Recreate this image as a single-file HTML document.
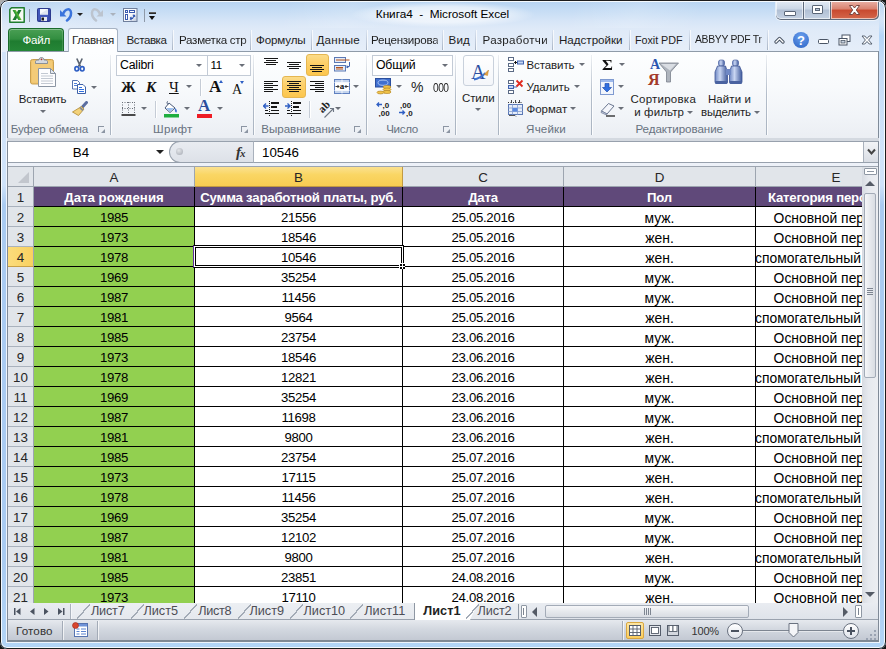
<!DOCTYPE html>
<html lang="ru">
<head>
<meta charset="utf-8">
<title>Книга4 - Microsoft Excel</title>
<style>
html,body{margin:0;padding:0;}
body{width:886px;height:649px;overflow:hidden;background:#151515 linear-gradient(135deg,#b5b5b5 0,#9a9a9a 6px,#151515 7px) no-repeat;background-size:12px 12px,auto;font-family:"Liberation Sans",sans-serif;font-size:11.5px;color:#1e1e1e;position:relative;}
#win{position:absolute;left:0;top:0;width:886px;height:649px;border-radius:8px 8px 7px 7px;overflow:hidden;background:linear-gradient(180deg,#d9e7f8 0,#d3e4f9 52px,#cfe3fa 185px,#aacbf1 205px,#a9cbf1 560px,#b3d5f7 100%);}
#win::before{content:"";position:absolute;left:1px;top:1px;width:884px;height:51px;background:linear-gradient(180deg,#b6d3f1 0,#c3dbf4 8px,#d6e5f7 20px,#dfeaf8 28px,#e6eef9 51px);}
#win::after{content:"";position:absolute;left:0;top:0;width:884px;height:647px;border:1px solid #1c1c1c;border-radius:8px 8px 7px 7px;box-shadow:inset 0 0 0 1px rgba(255,255,255,.85);pointer-events:none;z-index:50;}
#topglow{position:absolute;left:1px;top:2px;width:884px;height:26px;background:repeating-linear-gradient(115deg,rgba(255,255,255,0) 0,rgba(255,255,255,.14) 60px,rgba(255,255,255,0) 120px,rgba(255,255,255,0) 260px);}
#rstrip{position:absolute;left:879px;top:18px;width:6px;height:130px;background:linear-gradient(180deg,rgba(176,212,248,0) 0,#b4d6f8 18px,#c3dcf8 40px,rgba(207,227,250,0) 100%);}
#inner{position:absolute;left:6px;top:52px;width:874px;height:591px;border:1px solid #eef4fc;border-top:none;box-sizing:border-box;}
#inner::after{content:"";position:absolute;left:0;top:0;width:870px;height:589px;border-left:1px solid #808a97;border-right:1px solid #808a97;border-bottom:1px solid #808a97;}
i,b{font-style:normal;font-weight:normal;}u{text-decoration:none;}
.a{position:absolute;}
/* ---------- grid ---------- */
#grid{position:absolute;left:8px;top:167px;width:854px;height:436px;background:#fff;overflow:hidden;font-size:13.2px;color:#000;}
#grid .hdr{position:absolute;left:0;top:0;width:1000px;height:20px;}
#grid .hdr b,#grid .hdr i{position:absolute;top:0;height:19px;line-height:22px;text-align:center;color:#262626;background:#e1e5ea;border-right:1px solid #9da5b0;border-bottom:1px solid #9da5b0;font-size:13.4px;}
#grid .hdr i.corner{left:0;width:25px;}
#grid .hdr i.corner::after{content:"";position:absolute;left:10px;top:5px;width:0;height:0;border-left:11px solid transparent;border-bottom:11px solid #c2c6cd;}
#grid .hdr b.sel{background:linear-gradient(#fbe190 0%,#fad664 40%,#f8cc52 100%);border-right-color:#c29a43;border-bottom-color:#c29a43;}
.r{position:absolute;left:0;width:1000px;height:20px;}
.r span,.r b{position:absolute;top:0;height:19px;line-height:22px;text-align:center;white-space:nowrap;overflow:hidden;border-right:1px solid #000;border-bottom:1px solid #000;}
.r b.rh{left:0;width:25px;background:#e1e5ea;color:#262626;border-right:1px solid #9da5b0;border-bottom:1px solid #aab2bd;font-size:13.4px;}
.r b.rh.sel{background:linear-gradient(90deg,#fbdc7c,#f9d160);border-bottom-color:#c8a046;}
.ca{left:26px;width:160px;}
.cb{left:187px;width:207px;}
.cc{left:395px;width:160px;}
.cd{left:556px;width:191px;}
.ce{left:748px;width:164px;}
.r span.ca,.r span.cb,.r span.cc{letter-spacing:-.3px;}
.r span.cd,.r span.ce{font-size:13.9px;}
.r.h span.ca,.r.h span.cb,.r.h span.cc,.r.h span.cd,.r.h span.ce{letter-spacing:-.2px;font-size:13.2px;}
.r.h .ce u{margin-left:-2px;}
.ce u.w{margin-left:-2px;}
.r.h span.ca{letter-spacing:.05px;}
#grid .hdr b.ce{width:160px;}
.r span.ca{background:#92d050;}
.r.h span{background:#60497a;color:#fff;font-weight:bold;letter-spacing:-.2px;}
.ce u{position:absolute;left:50%;top:0;transform:translateX(-50%);}
#selbox{position:absolute;left:185px;top:78px;width:205px;height:17px;border:3px solid #000;border-left-color:#5a2a9c;}
#selbox i{position:absolute;left:-2px;top:-2px;right:-2px;bottom:-2px;border:1px solid #fff;}
#selbox b{position:absolute;left:-1px;top:-1px;right:-1px;bottom:-1px;border:1px solid #000;}
#selh{position:absolute;left:391px;top:96px;width:6px;height:6px;background:#fff;}
#selh::before{content:"";position:absolute;left:1px;top:1px;width:5px;height:5px;background:#000;}
#selh::after{content:"";position:absolute;left:3px;top:1px;width:1px;height:5px;background:#fff;box-shadow:none;}
#selh i{position:absolute;left:1px;top:3px;width:5px;height:1px;background:#fff;z-index:2;}
/* ---------- title bar ---------- */
.dd{position:absolute;width:0;height:0;border-left:3px solid transparent;border-right:3px solid transparent;border-top:3px solid #6a6f78;}
#tglow{position:absolute;left:352px;top:2px;width:182px;height:25px;background:radial-gradient(ellipse at 50% 50%,rgba(255,255,255,.75) 0%,rgba(255,255,255,.55) 45%,rgba(255,255,255,0) 72%);}
#title{position:absolute;top:7px;font-size:11.8px;line-height:14px;color:#000;white-space:pre;}
#wbtn{position:absolute;left:776px;top:1px;width:103px;height:19px;border-radius:0 0 5px 5px;background:#5f6b7c;box-shadow:0 0 0 1px rgba(255,255,255,.55);}
.wb{position:absolute;top:0;height:18px;background:linear-gradient(#e3ebf5 0%,#cbd7e6 45%,#b0bfd3 50%,#c5d2e3 100%);box-shadow:inset 0 0 0 1px rgba(255,255,255,.6);}
.wb.cl{background:linear-gradient(#e9b1a6 0%,#d9826f 45%,#c8492f 50%,#d4674b 100%);}
/* ---------- ribbon tabs ---------- */
#tabs{position:absolute;left:0;top:0;width:886px;height:52px;}
.tab{position:absolute;top:32px;height:16px;line-height:16px;font-size:11.6px;color:#1e1e1e;white-space:nowrap;text-align:left;}
.tab.clip{-webkit-mask-image:linear-gradient(90deg,#000 96%,transparent 106%);mask-image:linear-gradient(90deg,#000 96%,transparent 106%);}
.tsep{position:absolute;top:30px;width:1px;height:20px;background:linear-gradient(rgba(160,172,190,.1),#a9b5c6);box-shadow:1px 0 0 rgba(255,255,255,.7);}
#file{position:absolute;left:8px;top:28px;width:56px;height:23px;border-radius:4px 4px 0 0;background:linear-gradient(#4a9f54 0%,#338f41 45%,#1f7c30 55%,#258637 100%);border:1px solid #1a6b2b;border-bottom:none;box-sizing:border-box;box-shadow:inset 0 1px 0 rgba(255,255,255,.35),inset 1px 0 0 rgba(255,255,255,.15),inset -1px 0 0 rgba(255,255,255,.15);}
#home{position:absolute;left:68px;top:28px;width:50px;height:24px;border:1px solid #a7b3c3;border-bottom:none;border-radius:3px 3px 0 0;background:#fdfeff;box-sizing:border-box;z-index:3;}
/* ---------- ribbon ---------- */
#ribbon{position:absolute;left:0;top:0;width:886px;height:142px;}
#ribbon::before{content:"";position:absolute;left:7px;top:51px;width:870px;height:86px;border:1px solid #7f8b99;border-top:1px solid #8f9ba9;background:linear-gradient(#fdfeff 0%,#f8fafc 40%,#f1f4f8 75%,#ebeef3 100%);border-radius:0 0 2px 2px;}
#ribbon::after{content:"";position:absolute;left:7px;top:138px;width:872px;height:3px;background:#d4d9e0;border-bottom:1px solid #8b95a2;}
.rt{position:absolute;font-size:11.5px;color:#1e1e1e;white-space:nowrap;line-height:14px;letter-spacing:-.1px;}
.ser{position:absolute;font-family:"Liberation Serif",serif;color:#111;line-height:18px;white-space:nowrap;}
.gl{position:absolute;top:121px;height:16px;line-height:16px;font-size:11.6px;color:#68727f;white-space:nowrap;}
.gla{position:absolute;top:126px;width:6px;height:6px;border-left:1px solid #8c95a3;border-top:1px solid #8c95a3;box-sizing:border-box;}
.gla::after{content:"";position:absolute;left:2px;top:2px;width:0;height:0;border-left:4px solid transparent;border-bottom:4px solid #8c95a3;}
.gsep{position:absolute;top:55px;width:1px;height:80px;background:linear-gradient(rgba(175,185,198,.2),#b3bdca 50%,#aab4c1);box-shadow:1px 0 0 rgba(255,255,255,.8);}
.isep{position:absolute;width:1px;height:17px;background:#c5ccd6;box-shadow:1px 0 0 #fff;}
.cbx{position:absolute;height:19px;border:1px solid #c3cbd6;background:#fff;font-size:12.3px;}
.cbx span{position:absolute;top:0;line-height:19px;color:#000;white-space:nowrap;}
.hl{position:absolute;border:1px solid #e5b651;border-radius:3px;background:linear-gradient(#fbdc8a 0%,#fdd06a 40%,#fcc64d 100%);}
/* ---------- formula bar ---------- */
#fbar{position:absolute;left:0;top:0;width:886px;height:167px;}
#fwhite{position:absolute;left:8px;top:141px;width:870px;height:20px;background:#fff;border-top:1px solid #98a1ad;border-bottom:1px solid #98a1ad;}
#fbar::after{content:"";position:absolute;left:8px;top:163px;width:870px;height:3px;background:#edf1f8;border-bottom:1px solid #9da5b0;}
.ft{position:absolute;top:142px;height:20px;line-height:21px;font-size:13.3px;color:#000;white-space:nowrap;}
#fhandle{position:absolute;left:169px;top:141px;width:83px;height:20px;border:1px solid #98a1ad;border-right:1px solid #a9b1bc;border-radius:11px 0 0 11px;background:linear-gradient(#e9ecf1,#dde1e8);}
#fexp{position:absolute;left:863px;top:142px;width:15px;height:20px;background:linear-gradient(#f2f4f7,#d9dde4);border-left:1px solid #a9b1bc;box-sizing:border-box;}
/* ---------- scrollbars, sheet tabs, status ---------- */
#vscroll{position:absolute;left:862px;top:167px;width:16px;height:436px;background:linear-gradient(90deg,#d7dbe2,#e6e9ee 40%,#eceef2);}
#tabbar{position:absolute;left:8px;top:603px;width:870px;height:17px;background:linear-gradient(#e9ecf1,#dfe3ea);border-bottom:1px solid #9aa2ae;box-sizing:border-box;}
#sheets{position:absolute;left:0;top:0;width:514px;height:17px;overflow:hidden;}
#tabbar::before{content:"";position:absolute;left:62px;top:1px;width:1px;height:15px;background:#aab2bd;box-shadow:1px 0 0 #f4f6f9;}
#tabbar::after{content:"";position:absolute;left:64px;top:0;width:449px;height:16px;background:linear-gradient(#eceff3,#e6e9ee);}
#sheets{z-index:2;}
.sl{position:absolute;top:1px;width:13px;height:15px;background:linear-gradient(to bottom right,transparent 46.5%,#a3abb6 46.5%,#a3abb6 53.5%,transparent 53.500%);}
.slend{position:absolute;top:1px;width:1px;height:15px;background:#8e97a3;}
i.act{position:absolute;top:0;height:17px;background:#fff;border-left:1px solid #8e97a3;}
i.act::after{content:"";position:absolute;right:-8px;top:0;width:0;height:0;border-top:17px solid #fff;border-right:8px solid transparent;}
.st{position:absolute;top:0;height:16px;line-height:16px;font-size:12.7px;color:#4d4d55;white-space:nowrap;}
.st.on{color:#222;font-weight:bold;}
#status{position:absolute;left:8px;top:620px;width:870px;height:21px;background:linear-gradient(#e6e9ee 0%,#d3d8e0 45%,#c3c9d3 100%);border-bottom:1px solid #7f8894;box-sizing:border-box;}
.ssep{position:absolute;top:1px;width:1px;height:19px;background:#a3abb7;box-shadow:1px 0 0 rgba(255,255,255,.7);}
.zc{position:absolute;top:3px;width:14px;height:14px;border:1px solid #6a7280;border-radius:8px;background:linear-gradient(#fff,#dfe3ea);box-sizing:content-box;}

</style>
</head>
<body>
<div id="win">
<div id="tb">
<div id="topglow"></div><div id="inner"></div><i id="rstrip"></i>
<!-- excel icon -->
<svg class="a" style="left:9px;top:7px" width="16" height="16" viewBox="0 0 16 16"><path d="M2.500 .8h12.700v14.400H.8V2.500z" fill="#f6faf4" stroke="#1f7d2f" stroke-width="1.500" stroke-linejoin="round"/><path d="M9.300 3h3.200L6.800 13H3.500z" fill="#1d7a30"/><path d="M3.600 3h3.100l5.900 10H9.400z" fill="#5cb531"/><path d="M3.600 3h1.600l5.900 10H9.400z" fill="#2f9a3a"/></svg>
<i class="a" style="left:29px;top:9px;width:1px;height:13px;background:#8e99a8"></i>
<!-- save -->
<svg class="a" style="left:37px;top:8px" width="14" height="14" viewBox="0 0 14 14"><rect x=".5" y=".5" width="13" height="13" rx="1" fill="#4358bb" stroke="#2c3a8e"/><path d="M12 1v12M1 12.500h12" stroke="#34439c" stroke-width="1"/><rect x="3" y="1" width="8" height="5.500" fill="#f6f8fc"/><path d="M3 6l8-5v5.500H3z" fill="#dfe5f0"/><rect x="4" y="9" width="6" height="4" fill="#e4e8f2"/><rect x="4.500" y="9.500" width="2.500" height="3" fill="#1a1a1a"/></svg>
<!-- undo -->
<svg class="a" style="left:59px;top:7px" width="15" height="15" viewBox="0 0 15 15"><path d="M4.500 6C6 2 11.500 .5 12 5.500C12.300 9 10.500 11.500 8 13.500" fill="none" stroke="#3b74dc" stroke-width="2.500" stroke-linecap="round"/><path d="M1 3v6.500h6.500z" fill="#3b74dc"/></svg>
<i class="dd" style="left:77px;top:13px;border-top-color:#222"></i>
<!-- redo -->
<svg class="a" style="left:90px;top:7px" width="15" height="15" viewBox="0 0 15 15"><path d="M9.500 6C8 2 2.500 .5 2 5.500C1.700 9 3.500 11.500 6 13.500" fill="none" stroke="#bcc4cf" stroke-width="2.500" stroke-linecap="round"/><path d="M13 3v6.500H6.500z" fill="#bcc4cf"/></svg>
<i class="dd" style="left:109.500px;top:13px;border-top-color:#aab2bd"></i>
<!-- form icon -->
<svg class="a" style="left:123px;top:8px" width="15" height="14" viewBox="0 0 15 14"><defs><linearGradient id="fg1" x1="0" y1="0" x2="1" y2="1"><stop offset="0" stop-color="#fff"/><stop offset=".6" stop-color="#f4f6fa"/><stop offset="1" stop-color="#b9c4d8"/></linearGradient></defs><rect x=".5" y=".5" width="13.500" height="13" fill="url(#fg1)" stroke="#6f7f9c"/><rect x="2.500" y="2.500" width="2" height="2" fill="#fff" stroke="#3b5bb0"/><rect x="6.500" y="2.500" width="5" height="2" fill="#fff" stroke="#3b5bb0"/><rect x="2.500" y="6.500" width="2" height="5" fill="#fff" stroke="#3b5bb0"/><path d="M7 10.500h2.500l2-3.500M7 10.500l1.500-1.500M7 10.500l1.500 1.500M11.500 7l-1.800.3M11.500 7l.3 1.800" fill="none" stroke="#2f55b0" stroke-width="1.100"/></svg>
<i class="a" style="left:144px;top:9px;width:1px;height:13px;background:#8e99a8"></i>
<i class="a" style="left:149px;top:12px;width:7px;height:2px;background:linear-gradient(#777,#111)"></i>
<i class="dd" style="left:149px;top:15.500px;border-left-width:3.5px;border-right-width:3.5px;border-top-width:4px;border-top-color:#111"></i>
<i id="tglow"></i>
<div id="title" style="letter-spacing:-0.03px;left:375.800px">Книга4  -  Microsoft Excel</div>
<!-- window buttons -->
<div id="wbtn">
<i class="wb" style="left:0;width:27px;border-radius:0 0 0 5px"><i class="a" style="left:8px;top:10px;width:10px;height:3px;background:#fff;border:1px solid #5a6677;border-radius:1px"></i></i>
<i class="wb" style="left:28px;width:26px"><i class="a" style="left:8px;top:4px;width:9px;height:7px;border:1px solid #5a6677;background:#fff;border-radius:1px"><i class="a" style="left:2px;top:2px;width:3px;height:1px;border:1px solid #5a6677;background:#b9c6d8"></i></i></i>
<i class="wb cl" style="left:55px;width:47px;border-radius:0 0 5px 0"><svg class="a" style="left:17px;top:3px" width="13" height="12" viewBox="0 0 13 12"><path d="M1.500 1.500h3L6.500 4l2-2.500h3L8.300 6l3.200 4.500h-3L6.500 8l-2 2.500h-3L4.700 6z" fill="#fff" stroke="#6b3a36" stroke-width=".9" stroke-linejoin="round"/></svg></i>
</div>
</div>
<div id="tabs">
<div id="file"></div><span class="tab" style="letter-spacing:-0.25px;left:22.5px;color:#fff;z-index:4">Файл</span>
<div id="home"></div><span class="tab" style="letter-spacing:-0.31px;left:72px;z-index:4">Главная</span>
<span class="tab" style="letter-spacing:-0.44px;left:126.5px">Вставка</span>
<i class="tsep" style="left:172px"></i>
<span class="tab clip" style="letter-spacing:-0.28px;left:179.0px">Разметка стр</span>
<i class="tsep" style="left:250px"></i>
<span class="tab" style="letter-spacing:-0.14px;left:256.0px">Формулы</span>
<i class="tsep" style="left:311px"></i>
<span class="tab" style="letter-spacing:0.27px;left:316.5px">Данные</span>
<i class="tsep" style="left:366px"></i>
<span class="tab clip" style="letter-spacing:-0.25px;left:371.0px">Рецензирова</span>
<i class="tsep" style="left:442px"></i>
<span class="tab" style="letter-spacing:0.17px;left:448.5px">Вид</span>
<i class="tsep" style="left:475px"></i>
<span class="tab clip" style="letter-spacing:0.29px;left:482.5px">Разработчи</span>
<i class="tsep" style="left:552px"></i>
<span class="tab" style="letter-spacing:-0.01px;left:559.0px">Надстройки</span>
<i class="tsep" style="left:629px"></i>
<span class="tab" style="letter-spacing:-0.06px;left:635.0px;font-size:10.8px">Foxit PDF</span>
<i class="tsep" style="left:689px"></i>
<span class="tab clip" style="letter-spacing:-0.31px;left:695.0px;font-size:10.4px">ABBYY PDF Tr</span>
<i class="tsep" style="left:767px"></i>
<!-- right icons -->
<svg class="a" style="left:774px;top:36px" width="11" height="8" viewBox="0 0 11 8"><path d="M2 6L5.500 2.500 9 6" fill="none" stroke="#4a5565" stroke-width="3.200" stroke-linejoin="round" stroke-linecap="round"/><path d="M2 6L5.500 2.500 9 6" fill="none" stroke="#fff" stroke-width="1.300" stroke-linejoin="round" stroke-linecap="round"/></svg>
<i class="a" style="left:793px;top:32px;width:16px;height:16px;border-radius:8px;background:radial-gradient(circle at 50% 30%,#6aa0ee,#2b62c4);color:#fff;font-weight:bold;font-size:13px;line-height:17px;text-align:center">?</i>
<i class="a" style="left:818px;top:39px;width:9px;height:3px;background:#fff;border:1px solid #4a5565;border-radius:1.500px"></i>
<svg class="a" style="left:838px;top:34px" width="13" height="12" viewBox="0 0 13 12"><rect x="4" y="1" width="8" height="6.500" fill="#fff" stroke="#4a5565"/><rect x="1" y="4.500" width="8" height="6.500" fill="#fff" stroke="#4a5565"/><rect x="3" y="6.500" width="4" height="2.500" fill="#c9d3e0" stroke="#4a5565" stroke-width=".8"/></svg>
<svg class="a" style="left:861px;top:35px" width="12" height="10" viewBox="0 0 12 10"><path d="M1 1h2.800L6 3.500 8.200 1H11L7.600 5 11 9H8.200L6 6.500 3.800 9H1l3.400-4z" fill="#fff" stroke="#4a5565" stroke-width=".9" stroke-linejoin="round"/></svg>
</div>
<div id="ribbon">
<!-- ===== Буфер обмена ===== -->
<svg class="a" style="left:29px;top:56px" width="28" height="32" viewBox="0 0 28 32"><rect x="1.500" y="3.500" width="23" height="24.500" rx="2" fill="#f0c36a" stroke="#c9a050"/><rect x="3" y="5" width="20" height="21.500" rx="1" fill="#f3cb78"/><path d="M6.500 7.500V5.500c0-1 1-1.500 2.500-1.500h1c0-1.500.8-2.500 2.500-2.500S15 2.500 15 4h1c1.500 0 2.500.5 2.500 1.500v2z" fill="#d5d9df" stroke="#7f8894" stroke-width=".9"/><circle cx="12.500" cy="3.300" r=".9" fill="#a33"/><path d="M9.500 12.500h12l5 5V30.500H9.500z" fill="#fdfdfe" stroke="#8b95a3"/><path d="M21.500 12.500v5h5z" fill="#e4e8ee" stroke="#8b95a3" stroke-linejoin="round"/><path d="M12 17.500h7M12 20h12M12 22.500h12M12 25h12M12 27.500h12" stroke="#c3c9d2" stroke-width="1"/></svg>
<span class="rt" style="letter-spacing:-0.12px;left:18.700px;top:92px">Вставить</span>
<i class="dd" style="left:40px;top:110px"></i>
<!-- cut -->
<svg class="a" style="left:74px;top:58px" width="11" height="14" viewBox="0 0 11 14"><path d="M2.800 .5l3.700 8M8.200 .5L4.500 8.500" stroke="#5b6472" stroke-width="1.700" fill="none"/><ellipse cx="2.800" cy="10.800" rx="1.900" ry="2.200" fill="none" stroke="#2f5fc4" stroke-width="1.700"/><ellipse cx="8.200" cy="10.800" rx="1.900" ry="2.200" fill="none" stroke="#2f5fc4" stroke-width="1.700"/></svg>
<!-- copy -->
<svg class="a" style="left:71px;top:79px" width="16" height="16" viewBox="0 0 16 16"><path d="M1.500 1.500h5l2 2v6.500h-7z" fill="#fff" stroke="#5573b0"/><path d="M3 4.500h3M3 6.500h4" stroke="#4f7fd8" stroke-width="1"/><path d="M6.500 5.500h5.500l2.500 2.500v6.500h-8z" fill="#fff" stroke="#3f62a8"/><path d="M8 8.500h3M8 10.500h5M8 12.500h5" stroke="#2f6fe0" stroke-width="1"/></svg>
<i class="dd" style="left:91px;top:86px"></i>
<!-- format painter -->
<svg class="a" style="left:71px;top:101px" width="17" height="16" viewBox="0 0 17 16"><path d="M15.500 1.500l-5 5.500" stroke="#5b6ea0" stroke-width="3" stroke-linecap="round"/><path d="M10.500 5.500l2.500 2.500-5.500 6.500-6-3.500z" fill="#f3d27a" stroke="#b8923c" stroke-width=".9"/><path d="M9 6.500l3 3" stroke="#8b8f96" stroke-width="1.800"/></svg>
<span class="gl" style="letter-spacing:-0.12px;left:10.8px">Буфер обмена</span>
<i class="gla" style="left:98px"></i>
<i class="gsep" style="left:110px"></i>

<!-- ===== Шрифт ===== -->
<div class="cbx" style="left:116px;top:55px;width:90px"><span style="letter-spacing:-0.19px;left:3px">Calibri</span><i class="dd" style="left:79px;top:8px"></i></div>
<div class="cbx" style="left:207px;top:55px;width:42px"><span style="letter-spacing:-0.18px;left:2.500px;font-size:11.500px">11</span><i class="dd" style="left:31px;top:8px"></i></div>
<span class="ser" style="left:121px;top:78px;font-weight:bold;font-size:15px">Ж</span>
<span class="ser" style="left:146px;top:78px;font-weight:bold;font-style:italic;font-size:15px">К</span>
<span class="ser" style="left:169px;top:78px;font-size:15px;text-decoration:underline">Ч</span>
<i class="dd" style="left:186px;top:85px"></i>
<i class="isep" style="left:200px;top:79px"></i>
<span class="ser" style="left:209px;top:78px;font-size:17px;font-weight:bold">A</span><i class="a" style="left:219px;top:80px;width:0;height:0;border-left:2.500px solid transparent;border-right:2.500px solid transparent;border-bottom:3px solid #2f5fc4"></i>
<span class="ser" style="left:232px;top:81px;font-size:14px">A</span><i class="a" style="left:240px;top:81px;width:0;height:0;border-left:2.500px solid transparent;border-right:2.500px solid transparent;border-top:3px solid #2f5fc4"></i>
<!-- borders -->
<svg class="a" style="left:121px;top:101px" width="15" height="15" viewBox="0 0 15 15"><path d="M1.500 1v12M7.500 1v12M13.500 1v12M1 1.500h13M1 7.500h13" stroke="#6a6f78" stroke-width="1" stroke-dasharray="1 1.500"/><path d="M.5 14h14" stroke="#111" stroke-width="1.600"/></svg>
<i class="dd" style="left:141px;top:107px"></i>
<i class="isep" style="left:155px;top:101px"></i>
<!-- fill -->
<svg class="a" style="left:163px;top:100px" width="17" height="18" viewBox="0 0 17 18"><path d="M6 3l6 5-5 4.500-5-4.500z" fill="#fff" stroke="#4a5a78" stroke-width="1"/><path d="M5 1.500c-1 0-1.500 1.500 0 3" fill="none" stroke="#4a5a78"/><path d="M12 8c1.500 1 2.500 3 1.500 4.500-1.500 0-2-2-1.500-4.500z" fill="#3f72d0"/><path d="M3 8h8l-4 4z" fill="#9fc0ee"/><rect x="1" y="14" width="15" height="3.500" fill="#1fae3f"/></svg>
<i class="dd" style="left:184px;top:107px"></i>
<span class="ser" style="left:198px;top:97px;font-size:17px;font-weight:bold;color:#2b4e9c">A</span><i class="a" style="left:197px;top:114px;width:15px;height:4px;background:#ee1c25"></i>
<i class="dd" style="left:217px;top:107px"></i>
<span class="gl" style="letter-spacing:0.25px;left:153.1px">Шрифт</span>
<i class="gla" style="left:241px"></i>
<i class="gsep" style="left:253px"></i>

<!-- ===== Выравнивание ===== -->
<i class="hl" style="left:306px;top:54px;width:21px;height:20px"></i>
<i class="hl" style="left:282px;top:76px;width:22px;height:20px"></i>
<svg class="a" style="left:264px;top:58px" width="14" height="7" viewBox="0 0 14 7" shape-rendering="crispEdges"><g fill="#151515"><rect x="0" y="0" width="14" height="1"/><rect x="2" y="2" width="10" height="1"/><rect x="0" y="4" width="14" height="1"/><rect x="2" y="6" width="10" height="1"/></g></svg>
<svg class="a" style="left:287px;top:62px" width="14" height="7" viewBox="0 0 14 7" shape-rendering="crispEdges"><g fill="#151515"><rect x="0" y="0" width="14" height="1"/><rect x="2" y="2" width="10" height="1"/><rect x="0" y="4" width="14" height="1"/><rect x="2" y="6" width="10" height="1"/></g></svg>
<svg class="a" style="left:310px;top:65px" width="14" height="7" viewBox="0 0 14 7" shape-rendering="crispEdges"><g fill="#151515"><rect x="0" y="0" width="14" height="1"/><rect x="2" y="2" width="10" height="1"/><rect x="0" y="4" width="14" height="1"/><rect x="2" y="6" width="10" height="1"/></g></svg>
<svg class="a" style="left:334px;top:57px" width="17" height="15" viewBox="0 0 17 15"><rect x=".5" y=".5" width="11" height="5" fill="#e4ebf7" stroke="#5b78b4"/><rect x=".5" y="8.500" width="11" height="5.500" fill="#e4ebf7" stroke="#5b78b4"/><path d="M2 3h13.500M2 10.500h7M2 12h7" stroke="#b5531c" stroke-width="1"/><path d="M15.500 5v4l-2.500 2M15.500 9.500h-2.500M13 11V8.500" fill="none" stroke="#3f62b0" stroke-width="1"/></svg>
<svg class="a" style="left:264px;top:81px" width="14" height="11" viewBox="0 0 14 11" shape-rendering="crispEdges"><g fill="#151515"><rect x="0" y="0" width="14" height="1"/><rect x="0" y="2" width="9" height="1"/><rect x="0" y="4" width="14" height="1"/><rect x="0" y="6" width="9" height="1"/><rect x="0" y="8" width="14" height="1"/><rect x="0" y="10" width="9" height="1"/></g></svg>
<svg class="a" style="left:287px;top:81px" width="14" height="11" viewBox="0 0 14 11" shape-rendering="crispEdges"><g fill="#151515"><rect x="0" y="0" width="14" height="1"/><rect x="2" y="2" width="10" height="1"/><rect x="0" y="4" width="14" height="1"/><rect x="2" y="6" width="10" height="1"/><rect x="0" y="8" width="14" height="1"/><rect x="2" y="10" width="10" height="1"/></g></svg>
<svg class="a" style="left:310px;top:81px" width="14" height="11" viewBox="0 0 14 11" shape-rendering="crispEdges"><g fill="#151515"><rect x="0" y="0" width="14" height="1"/><rect x="5" y="2" width="9" height="1"/><rect x="0" y="4" width="14" height="1"/><rect x="5" y="6" width="9" height="1"/><rect x="0" y="8" width="14" height="1"/><rect x="5" y="10" width="9" height="1"/></g></svg>
<svg class="a" style="left:334px;top:79px" width="16" height="15" viewBox="0 0 16 15"><rect x=".5" y=".5" width="15" height="14" fill="#c5d5ee" stroke="#5f80c0"/><path d="M.5 3.500h15M.5 11.500h15M8 .5v3M8 11.500v3" stroke="#f4f7fc" stroke-width="1"/><rect x="1" y="4" width="14" height="7" fill="#fff"/><text x="8" y="10.300" font-family="Liberation Serif,serif" font-weight="bold" font-size="9" text-anchor="middle" fill="#111">a</text><path d="M1.500 7.500h3.500M11 7.500h3.500M3.500 6L5 7.500 3.500 9M12.500 6L11 7.500 12.500 9" stroke="#222" stroke-width=".9" fill="none"/></svg>
<i class="dd" style="left:353px;top:85px"></i>
<svg class="a" style="left:263px;top:101px" width="16" height="15" viewBox="0 0 16 15"><g fill="#151515" shape-rendering="crispEdges"><rect x="8" y="1" width="8" height="2"/><rect x="8" y="5" width="6" height="2"/><rect x="8" y="9" width="8" height="1"/><rect x="2" y="12" width="14" height="1"/><rect x="2" y="9" width="3" height="1"/><rect x="6" y="0" width="1" height="1"/><rect x="6" y="2" width="1" height="1"/><rect x="6" y="4" width="1" height="1"/><rect x="6" y="6" width="1" height="1"/><rect x="6" y="8" width="1" height="1"/><rect x="6" y="10" width="1" height="1"/><rect x="6" y="14" width="1" height="1"/></g><path d="M5.500 5H1M3 2.500L.5 5 3 7.500" fill="none" stroke="#2f5fc4" stroke-width="1.400"/></svg>
<svg class="a" style="left:285px;top:101px" width="16" height="15" viewBox="0 0 16 15"><g fill="#151515" shape-rendering="crispEdges"><rect x="8" y="1" width="8" height="2"/><rect x="8" y="5" width="6" height="2"/><rect x="8" y="9" width="8" height="1"/><rect x="2" y="12" width="14" height="1"/><rect x="2" y="9" width="3" height="1"/><rect x="6" y="0" width="1" height="1"/><rect x="6" y="2" width="1" height="1"/><rect x="6" y="4" width="1" height="1"/><rect x="6" y="6" width="1" height="1"/><rect x="6" y="8" width="1" height="1"/><rect x="6" y="10" width="1" height="1"/><rect x="6" y="14" width="1" height="1"/></g><path d="M0 5h4.500M2.500 2.500L5 5 2.500 7.500" fill="none" stroke="#2f5fc4" stroke-width="1.400"/></svg>
<i class="isep" style="left:309px;top:101px"></i>
<svg class="a" style="left:317px;top:100px" width="19" height="19" viewBox="0 0 19 19"><text x="0" y="0" transform="translate(5.500,13.500) rotate(-45)" font-family="Liberation Serif,serif" font-size="11" font-weight="bold" fill="#222">ab</text><path d="M7.500 17.500L16.500 8.500M13 8.500h3.500V12" fill="none" stroke="#6f7784" stroke-width="1.100"/></svg>
<i class="dd" style="left:335px;top:107px"></i>
<span class="gl" style="letter-spacing:-0.02px;left:261.2px">Выравнивание</span>
<i class="gla" style="left:354px"></i>
<i class="gsep" style="left:366px"></i>
<!-- ===== Число ===== -->
<div class="cbx" style="left:372px;top:55px;width:79px"><span style="letter-spacing:-0.19px;left:3px">Общий</span><i class="dd" style="left:69px;top:8px"></i></div>
<svg class="a" style="left:375px;top:78px" width="18" height="17" viewBox="0 0 18 17"><rect x=".5" y=".5" width="15" height="8.500" fill="#3f6fd0" stroke="#2b4e9c"/><ellipse cx="8" cy="4.700" rx="5" ry="2.600" fill="none" stroke="#a9c4f2" stroke-width="1"/><ellipse cx="12" cy="9" rx="4" ry="1.500" fill="#f3c64a" stroke="#b5872a" stroke-width=".7"/><ellipse cx="12" cy="11.500" rx="4" ry="1.500" fill="#f3c64a" stroke="#b5872a" stroke-width=".7"/><ellipse cx="12" cy="14" rx="4" ry="1.500" fill="#f3c64a" stroke="#b5872a" stroke-width=".7"/><ellipse cx="5.500" cy="14.500" rx="3.500" ry="1.400" fill="#f3c64a" stroke="#b5872a" stroke-width=".7"/></svg>
<i class="dd" style="left:396px;top:85px"></i>
<span class="rt" style="left:411px;top:79px;font-size:14px;line-height:16px">%</span>
<span class="rt" style="left:433px;top:80px;font-size:12px;letter-spacing:-.6px;line-height:16px;transform:scaleX(.85);transform-origin:0 0">000</span>
<svg class="a" style="left:376px;top:101px" width="17" height="16" viewBox="0 0 17 16"><text x="6.500" y="7" font-size="8" font-family="Liberation Sans,sans-serif" font-weight="bold" fill="#222">,0</text><text x="2.500" y="15" font-size="8" font-family="Liberation Sans,sans-serif" font-weight="bold" fill="#222">,00</text><path d="M6 3.500H1M3 1.500L1 3.500 3 5.500" fill="none" stroke="#2f5fc4" stroke-width="1.300"/></svg>
<svg class="a" style="left:398px;top:101px" width="17" height="16" viewBox="0 0 17 16"><text x="2" y="7" font-size="8" font-family="Liberation Sans,sans-serif" font-weight="bold" fill="#222">,00</text><text x="8" y="15" font-size="8" font-family="Liberation Sans,sans-serif" font-weight="bold" fill="#222">,0</text><path d="M1 11.500H6.500M4.500 9.500l2 2-2 2" fill="none" stroke="#2f5fc4" stroke-width="1.300"/></svg>
<span class="gl" style="letter-spacing:-0.33px;left:386.2px">Число</span>
<i class="gla" style="left:443px"></i>
<i class="gsep" style="left:455px"></i>

<!-- ===== Стили ===== -->
<div class="a" style="left:463px;top:55px;width:29px;height:29px;border:1px solid #c9d1dc;border-radius:3px;background:linear-gradient(#fff,#f4f6fa)"><span class="ser" style="left:7px;top:5px;font-size:20px;color:#2b4ea0;line-height:22px">A</span><svg class="a" style="left:9px;top:13px" width="17" height="12" viewBox="0 0 17 12"><path d="M1 10.500c4-.5 8-3 11.500-6.500" stroke="#3f72d0" stroke-width="1.800" fill="none"/><path d="M11 5.500l4.500-4.500-1 5.500z" fill="#e8a33d" stroke="#b87a22" stroke-width=".5"/></svg></div>
<span class="rt" style="letter-spacing:-0.13px;left:462px;top:91px">Стили</span>
<i class="dd" style="left:475px;top:108px"></i>
<i class="gsep" style="left:498px"></i>

<!-- ===== Ячейки ===== -->
<svg class="a" style="left:507px;top:57px" width="17" height="16" viewBox="0 0 17 16"><rect x="1.500" y=".5" width="5" height="3" fill="#fff" stroke="#5b6a85"/><rect x="1.500" y="6.500" width="5" height="3" fill="#fff" stroke="#5b6a85"/><rect x="1.500" y="11.500" width="5" height="3" fill="#fff" stroke="#5b6a85"/><rect x="10.500" y="4" width="6" height="3" fill="#c5d6f2" stroke="#3f62b0"/><path d="M10 5.500H7.500M9 4L7.500 5.500 9 7" fill="none" stroke="#111" stroke-width="1"/></svg>
<span class="rt" style="letter-spacing:-0.09px;left:526.500px;top:58px">Вставить</span><i class="dd" style="left:579px;top:63px"></i>
<svg class="a" style="left:507px;top:79px" width="17" height="16" viewBox="0 0 17 16"><rect x="1.500" y="1.500" width="5" height="3" fill="#fff" stroke="#5b6a85"/><rect x="1.500" y="6.500" width="5" height="3" fill="#c5d6f2" stroke="#3f62b0"/><rect x="1.500" y="11.500" width="5" height="3" fill="#fff" stroke="#5b6a85"/><path d="M7 8h3" stroke="#3f62b0"/><path d="M9.500 1.500l6 6M15.500 1.500l-6 6" stroke="#e02a1f" stroke-width="1.800"/></svg>
<span class="rt" style="letter-spacing:-0.13px;left:526.500px;top:80px">Удалить</span><i class="dd" style="left:574px;top:85px"></i>
<svg class="a" style="left:507px;top:100px" width="17" height="17" viewBox="0 0 17 17"><path d="M1 2.500h15" stroke="#333" stroke-dasharray="1 1.500"/><path d="M4.500 0v3M8.500 0v3M12.500 0v3" stroke="#333" stroke-width=".9"/><rect x="1.500" y="4.500" width="14" height="10" fill="#e6edf8" stroke="#5b78b4"/><path d="M1.500 8h14M1.500 11.500h14M5.500 4.500v10M10.500 4.500v10" stroke="#8ea6d4" stroke-width=".9"/><rect x="5.500" y="8" width="5" height="3.500" fill="#5b8ae0"/><path d="M2 15.500h6l1 1" stroke="#555" fill="none"/></svg>
<span class="rt" style="letter-spacing:-0.03px;left:526.500px;top:102px">Формат</span><i class="dd" style="left:570px;top:107px"></i>
<span class="gl" style="letter-spacing:0.17px;left:526.1px">Ячейки</span>
<i class="gsep" style="left:591px"></i>

<!-- ===== Редактирование ===== -->
<span class="ser" style="left:602px;top:55px;font-size:14.500px;font-weight:bold;line-height:20px;transform:scaleX(1.15);transform-origin:0 0">Σ</span><i class="dd" style="left:619px;top:63px"></i>
<svg class="a" style="left:600px;top:79px" width="15" height="16" viewBox="0 0 15 16"><rect x=".5" y=".5" width="13" height="15" fill="#f1f5fc" stroke="#7f9ad0"/><rect x="1" y="1" width="12" height="2" fill="#9db9ec"/><path d="M5 4.500h4v4h2.500L7 13 2.500 8.500H5z" fill="#2f6fe0" stroke="#1f4fb0" stroke-width=".7"/></svg>
<i class="dd" style="left:618px;top:85px"></i>
<svg class="a" style="left:600px;top:101px" width="16" height="16" viewBox="0 0 16 16"><path d="M1.500 10l7-7.500 5.500 2.500-7 8z" fill="#f4f6fb" stroke="#6a7690" stroke-width="1"/><path d="M1.500 10l5.500 3-.5 1-5.500-2.500z" fill="#c8d2e6" stroke="#6a7690" stroke-width=".7"/><path d="M6 15h9" stroke="#222" stroke-width="1.300"/></svg>
<i class="dd" style="left:618px;top:107px"></i>
<!-- sort & filter -->
<svg class="a" style="left:647px;top:57px" width="32" height="30" viewBox="0 0 32 30"><text x="3" y="12" font-family="Liberation Serif,serif" font-weight="bold" font-size="14" fill="#2b55b0">А</text><text x="1" y="28" font-family="Liberation Serif,serif" font-weight="bold" font-size="16" fill="#a33a2a">Я</text><path d="M12 6h19.500l-8 9v10h-4V15z" fill="#aeb4bd" stroke="#7b828d" stroke-width=".8"/><path d="M14 7h15l-6 6.500z" fill="#d9dde3"/></svg>
<span class="rt" style="letter-spacing:0.24px;left:630.500px;top:92px">Сортировка</span>
<span class="rt" style="letter-spacing:0.09px;left:634.300px;top:105px">и фильтр</span><i class="dd" style="left:687px;top:111px"></i>
<!-- binoculars -->
<svg class="a" style="left:714px;top:59px" width="29" height="26" viewBox="0 0 29 26"><defs><linearGradient id="bg1" x1="0" x2="1"><stop offset="0" stop-color="#6f88c4"/><stop offset=".4" stop-color="#c9d6f2"/><stop offset="1" stop-color="#3f5a9c"/></linearGradient></defs><rect x="4.500" y="1" width="6" height="6" rx="2" fill="url(#bg1)" stroke="#4a62a0" stroke-width=".7"/><rect x="18.500" y="1" width="6" height="6" rx="2" fill="url(#bg1)" stroke="#4a62a0" stroke-width=".7"/><path d="M3.500 7h8l2 6v10.500H1V13z" fill="url(#bg1)" stroke="#3f5694" stroke-width=".8"/><path d="M17.500 7h8l2.500 6v10.500H15.500V13z" fill="url(#bg1)" stroke="#3f5694" stroke-width=".8"/><rect x="12" y="10" width="5" height="6" fill="#6f88c4"/><rect x="1" y="22" width="12.500" height="3" rx="1" fill="#4a62a0"/><rect x="15.500" y="22" width="12.500" height="3" rx="1" fill="#4a62a0"/></svg>
<span class="rt" style="letter-spacing:0.07px;left:708px;top:92px">Найти и</span>
<span class="rt" style="letter-spacing:-0.23px;left:701.100px;top:105px">выделить</span><i class="dd" style="left:754px;top:111px"></i>
<span class="gl" style="letter-spacing:-0.05px;left:635.4px">Редактирование</span>
<i class="gsep" style="left:766px"></i>
</div>
<div id="fbar">
<div id="fwhite"></div>
<span class="ft" style="left:8px;width:146px;text-align:center">B4</span>
<i class="dd" style="left:156px;top:150px;border-left-width:4px;border-right-width:4px;border-top-width:4px;border-top-color:#222"></i>
<div id="fhandle"><i class="a" style="left:5.500px;top:6px;width:7px;height:7px;border-radius:4px;background:radial-gradient(circle at 40% 35%,#e3e5e9,#a4a9b2)"></i><span class="ser" style="left:66px;top:1px;font-style:italic;font-weight:bold;font-size:15px;line-height:18px;color:#333;letter-spacing:-1px">f<span style="font-size:11px">x</span></span></div>
<span class="ft" style="left:262px">10546</span>
<div id="fexp"><svg class="a" style="left:3px;top:6px" width="9" height="8" viewBox="0 0 9 8"><path d="M1 1.500l3.500 4 3.500-4" fill="none" stroke="#444" stroke-width="2"/></svg></div>
</div>
<div id="grid">
<div class="hdr"><i class="corner"></i><b class="ca">A</b><b class="cb sel">B</b><b class="cc">C</b><b class="cd">D</b><b class="ce">E</b></div>
<div class="r h" style="top:20px"><b class="rh">1</b><span class="ca">Дата рождения</span><span class="cb">Сумма заработной платы, руб.</span><span class="cc">Дата</span><span class="cd">Пол</span><span class="ce"><u>Категория персонала</u></span></div>
<div class="r" style="top:40px"><b class="rh">2</b><span class="ca">1985</span><span class="cb">21556</span><span class="cc">25.05.2016</span><span class="cd">муж.</span><span class="ce"><u>Основной персонал</u></span></div>
<div class="r" style="top:60px"><b class="rh">3</b><span class="ca">1973</span><span class="cb">18546</span><span class="cc">25.05.2016</span><span class="cd">жен.</span><span class="ce"><u>Основной персонал</u></span></div>
<div class="r" style="top:80px"><b class="rh sel">4</b><span class="ca">1978</span><span class="cb">10546</span><span class="cc">25.05.2016</span><span class="cd">жен.</span><span class="ce"><u class="w">Вспомогательный персонал</u></span></div>
<div class="r" style="top:100px"><b class="rh">5</b><span class="ca">1969</span><span class="cb">35254</span><span class="cc">25.05.2016</span><span class="cd">муж.</span><span class="ce"><u>Основной персонал</u></span></div>
<div class="r" style="top:120px"><b class="rh">6</b><span class="ca">1987</span><span class="cb">11456</span><span class="cc">25.05.2016</span><span class="cd">муж.</span><span class="ce"><u>Основной персонал</u></span></div>
<div class="r" style="top:140px"><b class="rh">7</b><span class="ca">1981</span><span class="cb">9564</span><span class="cc">25.05.2016</span><span class="cd">жен.</span><span class="ce"><u class="w">Вспомогательный персонал</u></span></div>
<div class="r" style="top:160px"><b class="rh">8</b><span class="ca">1985</span><span class="cb">23754</span><span class="cc">23.06.2016</span><span class="cd">муж.</span><span class="ce"><u>Основной персонал</u></span></div>
<div class="r" style="top:180px"><b class="rh">9</b><span class="ca">1973</span><span class="cb">18546</span><span class="cc">23.06.2016</span><span class="cd">жен.</span><span class="ce"><u>Основной персонал</u></span></div>
<div class="r" style="top:200px"><b class="rh">10</b><span class="ca">1978</span><span class="cb">12821</span><span class="cc">23.06.2016</span><span class="cd">жен.</span><span class="ce"><u class="w">Вспомогательный персонал</u></span></div>
<div class="r" style="top:220px"><b class="rh">11</b><span class="ca">1969</span><span class="cb">35254</span><span class="cc">23.06.2016</span><span class="cd">муж.</span><span class="ce"><u>Основной персонал</u></span></div>
<div class="r" style="top:240px"><b class="rh">12</b><span class="ca">1987</span><span class="cb">11698</span><span class="cc">23.06.2016</span><span class="cd">муж.</span><span class="ce"><u>Основной персонал</u></span></div>
<div class="r" style="top:260px"><b class="rh">13</b><span class="ca">1981</span><span class="cb">9800</span><span class="cc">23.06.2016</span><span class="cd">жен.</span><span class="ce"><u class="w">Вспомогательный персонал</u></span></div>
<div class="r" style="top:280px"><b class="rh">14</b><span class="ca">1985</span><span class="cb">23754</span><span class="cc">25.07.2016</span><span class="cd">муж.</span><span class="ce"><u>Основной персонал</u></span></div>
<div class="r" style="top:300px"><b class="rh">15</b><span class="ca">1973</span><span class="cb">17115</span><span class="cc">25.07.2016</span><span class="cd">жен.</span><span class="ce"><u>Основной персонал</u></span></div>
<div class="r" style="top:320px"><b class="rh">16</b><span class="ca">1978</span><span class="cb">11456</span><span class="cc">25.07.2016</span><span class="cd">жен.</span><span class="ce"><u class="w">Вспомогательный персонал</u></span></div>
<div class="r" style="top:340px"><b class="rh">17</b><span class="ca">1969</span><span class="cb">35254</span><span class="cc">25.07.2016</span><span class="cd">муж.</span><span class="ce"><u>Основной персонал</u></span></div>
<div class="r" style="top:360px"><b class="rh">18</b><span class="ca">1987</span><span class="cb">12102</span><span class="cc">25.07.2016</span><span class="cd">муж.</span><span class="ce"><u>Основной персонал</u></span></div>
<div class="r" style="top:380px"><b class="rh">19</b><span class="ca">1981</span><span class="cb">9800</span><span class="cc">25.07.2016</span><span class="cd">жен.</span><span class="ce"><u class="w">Вспомогательный персонал</u></span></div>
<div class="r" style="top:400px"><b class="rh">20</b><span class="ca">1985</span><span class="cb">23851</span><span class="cc">24.08.2016</span><span class="cd">муж.</span><span class="ce"><u>Основной персонал</u></span></div>
<div class="r" style="top:420px"><b class="rh">21</b><span class="ca">1973</span><span class="cb">17110</span><span class="cc">24.08.2016</span><span class="cd">жен.</span><span class="ce"><u>Основной персонал</u></span></div>
<div id="selbox"><i></i><b></b></div><div id="selh"><i></i></div>
</div>
<div id="vscroll">
<i class="a" style="left:2px;top:1px;width:13px;height:7px;border:1px solid #8e97a3;box-sizing:border-box;background:#fff;border-radius:1px"><i class="a" style="left:2px;top:2px;width:7px;height:1px;background:#8e97a3"></i></i>
<i class="a" style="left:3px;top:14px;width:0;height:0;border-left:5px solid transparent;border-right:5px solid transparent;border-bottom:5px solid #555b66"></i>
<div class="a" style="left:2px;top:26px;width:12px;height:185px;border:1px solid #a3abb7;border-radius:2px;background:linear-gradient(90deg,#f6f7f9,#e3e6eb 60%,#d9dde3);box-sizing:border-box"><i class="a" style="left:2px;top:94px;width:6px;height:1px;background:#7d8591;box-shadow:0 2px 0 #7d8591,0 4px 0 #7d8591,0 6px 0 #7d8591"></i></div>
<i class="a" style="left:3px;top:425px;width:0;height:0;border-left:5px solid transparent;border-right:5px solid transparent;border-top:5px solid #555b66"></i>
</div>
<div id="tabbar">
<svg class="a" style="left:5px;top:4px" width="54" height="10" viewBox="0 0 54 10"><g fill="#4a5260"><rect x="1" y="1" width="1.500" height="7"/><path d="M7.500 1v7L3 4.500z"/><path d="M21.500 1v7L17 4.500z"/><path d="M31 1v7l4.500-3.500z"/><path d="M45 1v7l4.500-3.500z"/><rect x="50" y="1" width="1.500" height="7"/></g></svg>
<div id="sheets">
<i class="sl" style="left:69.0px"></i>
<i class="sl" style="left:123.0px"></i>
<i class="sl" style="left:176.0px"></i>
<i class="sl" style="left:229.6px"></i>
<i class="sl" style="left:282.0px"></i>
<i class="sl" style="left:342.0px"></i>
<i class="act" style="left:406px;width:55px"></i>
<i class="sl" style="left:458px"></i>
<i class="slend" style="left:510px"></i>
<span class="st" style="letter-spacing:-0.23px;left:83.0px">Лист7</span>
<span class="st" style="letter-spacing:-0.04px;left:135.5px">Лист5</span>
<span class="st" style="letter-spacing:-0.34px;left:190.2px">Лист8</span>
<span class="st" style="letter-spacing:-0.03px;left:241.5px">Лист9</span>
<span class="st" style="letter-spacing:-0.01px;left:295.5px">Лист10</span>
<span class="st" style="letter-spacing:0.09px;left:356.2px">Лист11</span>
<span class="st on" style="letter-spacing:0.03px;left:415.3px">Лист1</span>
<span class="st" style="letter-spacing:-0.12px;left:469.5px">Лист2</span>
</div>
<i class="a" style="left:513px;top:2px;width:6px;height:13px;border:1px solid #8e97a3;background:#fff;box-sizing:border-box;border-radius:1px"><i class="a" style="left:1px;top:2px;width:1px;height:7px;background:#7d8591"></i></i>
<i class="a" style="left:524px;top:4px;width:0;height:0;border-top:5px solid transparent;border-bottom:5px solid transparent;border-right:5px solid #555b66"></i>
<div class="a" style="left:537px;top:2px;width:204px;height:13px;border:1px solid #a3abb7;border-radius:2px;background:linear-gradient(#f6f7f9,#e3e6eb 60%,#d9dde3);box-sizing:border-box"><i class="a" style="left:98px;top:2px;width:1px;height:7px;background:#7d8591;box-shadow:2px 0 0 #7d8591,4px 0 0 #7d8591,6px 0 0 #7d8591"></i></div>
<i class="a" style="left:835px;top:4px;width:0;height:0;border-top:5px solid transparent;border-bottom:5px solid transparent;border-left:5px solid #555b66"></i>
<i class="a" style="left:847px;top:2px;width:7px;height:13px;border:1px solid #8e97a3;background:#fff;box-sizing:border-box;border-radius:1px"><i class="a" style="left:2px;top:2px;width:1px;height:7px;background:#7d8591"></i></i>
</div>
<div id="status">
<span class="a" style="letter-spacing:0.15px;left:8px;top:3px;line-height:16px;font-size:11.6px;color:#333">Готово</span>
<i class="ssep" style="left:54px"></i>
<svg class="a" style="left:64px;top:2px" width="17" height="16" viewBox="0 0 17 16"><rect x="2.500" y="1.500" width="13" height="13" fill="#fff" stroke="#5573b0"/><rect x="3" y="2" width="12" height="2.500" fill="#6f93d8"/><path d="M4.500 7h3M9 7h5M4.500 9.500h3M9 9.500h5M4.500 12h3M9 12h5" stroke="#5b84d0" stroke-width="1.200"/><circle cx="3.500" cy="3.500" r="3" fill="#d8452e" stroke="#a52a1a" stroke-width=".6"/></svg>
<i class="ssep" style="left:89px"></i>
<i class="ssep" style="left:614px"></i>
<i class="a" style="left:618px;top:2px;width:18px;height:17px;border:1px solid #d9a73f;border-radius:2px;background:linear-gradient(#fde6a3,#fbcd5d);box-sizing:border-box"></i>
<svg class="a" style="left:621px;top:5px" width="12" height="11" viewBox="0 0 12 11"><rect x=".5" y=".5" width="11" height="10" fill="#fff" stroke="#555d6b"/><path d="M.5 4h11M.5 7.500h11M4 .5v10M8 .5v10" stroke="#555d6b" stroke-width=".9"/></svg>
<svg class="a" style="left:641px;top:5px" width="12" height="11" viewBox="0 0 12 11"><rect x=".5" y=".5" width="11" height="10" fill="#e3e6ec" stroke="#555d6b"/><rect x="2.500" y="2.500" width="7" height="6" fill="#fff" stroke="#555d6b" stroke-width=".9"/></svg>
<svg class="a" style="left:659px;top:5px" width="12" height="11" viewBox="0 0 12 11"><rect x=".5" y=".5" width="11" height="10" fill="#d4d8df" stroke="#555d6b"/><rect x="2" y=".5" width="4" height="6" fill="#fff" stroke="#555d6b" stroke-width=".9"/><rect x="6" y=".5" width="4" height="6" fill="#fff" stroke="#555d6b" stroke-width=".9"/></svg>
<span class="a" style="letter-spacing:-0.16px;left:683.500px;top:3px;line-height:16px;font-size:11px;color:#333">100%</span>
<i class="zc" style="left:719px"><i class="a" style="left:3px;top:6px;width:8px;height:2px;background:#4a5260"></i></i>
<i class="a" style="left:735px;top:10px;width:101px;height:1px;background:#7d8591;box-shadow:0 1px 0 rgba(255,255,255,.45)"></i>
<svg class="a" style="left:780px;top:3px" width="11" height="15" viewBox="0 0 11 15"><path d="M1 .5h9v9L5.500 14 1 9.500z" fill="#f4f5f8" stroke="#6a7280"/></svg>
<i class="zc" style="left:835px"><i class="a" style="left:3px;top:6px;width:8px;height:2px;background:#4a5260"></i><i class="a" style="left:6px;top:3px;width:2px;height:8px;background:#4a5260"></i></i>
<svg class="a" style="left:857px;top:9px" width="12" height="12" viewBox="0 0 12 12"><g fill="#9aa3b2"><rect x="9" y="1" width="2" height="2"/><rect x="5" y="5" width="2" height="2"/><rect x="9" y="5" width="2" height="2"/><rect x="1" y="9" width="2" height="2"/><rect x="5" y="9" width="2" height="2"/><rect x="9" y="9" width="2" height="2"/></g></svg>
</div>
</div>
</body>
</html>
